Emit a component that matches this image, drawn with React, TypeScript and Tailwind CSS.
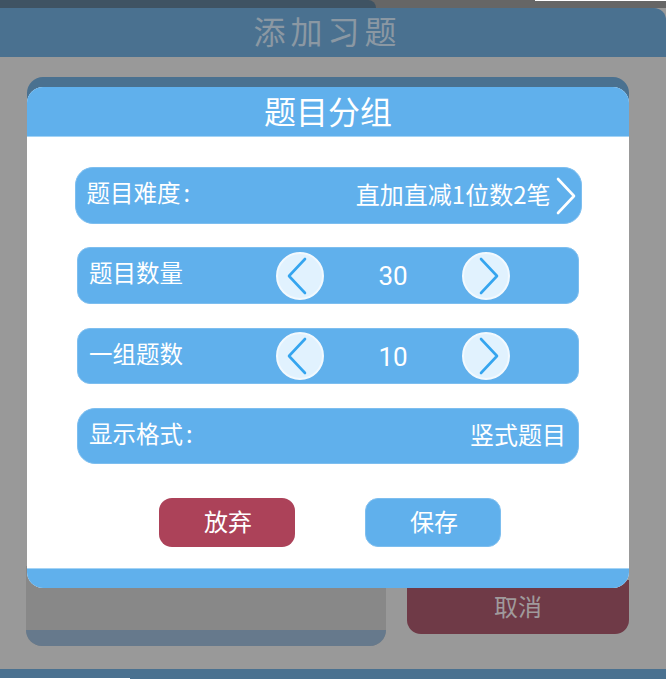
const cjk = { fontFamily: '"Noto Sans CJK SC", "Noto Sans", sans-serif' };

function Chevron({ dir, color }: { dir: "left" | "right"; color: string }) {
  const d = dir === "left" ? "M18 3 L2 20 L18 37" : "M2 3 L18 20 L2 37";
  return (
    <svg width="20" height="40" viewBox="0 0 20 40" fill="none">
      <path d={d} stroke={color} strokeWidth="2.6" strokeLinecap="round" strokeLinejoin="round" />
    </svg>
  );
}

function StepButton({ dir }: { dir: "left" | "right" }) {
  return (
    <div className="flex h-[48px] w-[48px] shrink-0 items-center justify-center rounded-full border-2 border-[#f2f9fe] bg-[#e1f2fe]">
      <div className={dir === "left" ? "-translate-x-[3px]" : "translate-x-[3px]"}>
        <Chevron dir={dir} color="#35a5ef" />
      </div>
    </div>
  );
}

function Stepper({ label, value, tall }: { label: string; value: string; tall?: boolean }) {
  return (
    <div
      className={`flex w-[502px] items-center rounded-[13px] border border-[#7dbeef] bg-[#60b0ec] text-white ${tall ? "h-[57px]" : "h-[56px]"}`}
    >
      <div className="w-[198px] pb-[5px] pl-[11px] text-[23.5px]">{label}</div>
      <StepButton dir="left" />
      <div className="w-[138px] pt-[2px] text-center font-['Roboto'] text-[26px] font-normal">{value}</div>
      <StepButton dir="right" />
    </div>
  );
}

export default function App() {
  return (
    <div className="relative flex h-[679px] w-[666px] flex-col overflow-hidden bg-[#999999]" style={cjk}>
      <div className="relative h-[8px] shrink-0 bg-[#666666]">
        <div className="h-[8px] w-[376px] rounded-tr-[8px] bg-[#3f5363]" />
        <div className="absolute right-0 top-0 h-px w-[131px] bg-white" />
      </div>
      <div className="flex h-[49px] shrink-0 items-center justify-center rounded-tr-[12px] bg-[#4a7190] pb-[6px] pr-[11px] text-[32px] tracking-[5px] text-[#8b98a3]">
        添加习题
      </div>

      <div className="flex flex-1 flex-col pl-[27px] pr-[37px] pt-[20px]">
        <div className="h-[40px] rounded-t-[16px] bg-[#4a7190]" />
        <div className="flex-1" />
        <div className="mb-[23px] flex items-end justify-between">
          <div className="-ml-px flex h-[80px] w-[360px] flex-col justify-end overflow-hidden rounded-b-[16px] bg-[#888888]">
            <div className="h-[16px] bg-[#66798c]" />
          </div>
          <div className="mb-[12px] flex h-[54px] w-[222px] items-end justify-center rounded-b-[14px] bg-[#6f3a47] pb-[10px] text-[24px] text-[#a09a9c]">
            取消
          </div>
        </div>
      </div>

      <div className="h-[10px] shrink-0 bg-[#4a7190]">
        <div className="mt-[9px] h-px w-[130px] bg-white" />
      </div>

      <div className="absolute left-[27px] top-[87px] flex h-[501px] w-[602px] flex-col overflow-hidden rounded-[16px] bg-white">
        <div className="flex h-[50px] shrink-0 items-center justify-center border-b border-[#a3d3f5] bg-[#60b0ec] pb-[4px] text-[32px] text-white">
          题目分组
        </div>

        <div className="flex flex-1 flex-col items-center pt-[30px]">
          <div className="flex h-[57px] w-[507px] items-center justify-between rounded-[18px] border border-[#7dbeef] bg-[#60b0ec] pl-[11px] pr-[5px] text-white">
            <span className="pb-[6px] text-[23.5px]">
              题目难度<span className="ml-[3px]">:</span>
            </span>
            <span className="flex items-center gap-[5px] text-[24px]">
              <span className="pb-[4px]">直加直减1位数2笔</span>
              <Chevron dir="right" color="#ffffff" />
            </span>
          </div>

          <div className="mt-[23px]">
            <Stepper label="题目数量" value="30" tall />
          </div>
          <div className="mt-[24px]">
            <Stepper label="一组题数" value="10" />
          </div>

          <div className="mt-[24px] flex h-[56px] w-[502px] items-center justify-between rounded-[18px] border border-[#7dbeef] bg-[#60b0ec] px-[11px] text-white">
            <span className="pb-[5px] text-[23.5px]">
              显示格式<span className="ml-[3px]">:</span>
            </span>
            <span className="pb-[5px] pr-[1px] text-[24px]">竖式题目</span>
          </div>

          <div className="ml-[4px] mt-[34px] flex gap-[70px]">
            <div className="flex h-[49px] w-[136px] items-center justify-center rounded-[13px] bg-[#ac4259] pb-[3px] pl-[2px] text-[24px] text-white">
              放弃
            </div>
            <div className="flex h-[49px] w-[136px] items-center justify-center rounded-[13px] border border-[#7dbeef] bg-[#60b0ec] pb-[3px] pl-[2px] text-[24px] text-white">
              保存
            </div>
          </div>
        </div>

        <div className="h-[20px] shrink-0 border-t border-[#a3d3f5] bg-[#60b0ec]" />
      </div>
    </div>
  );
}
